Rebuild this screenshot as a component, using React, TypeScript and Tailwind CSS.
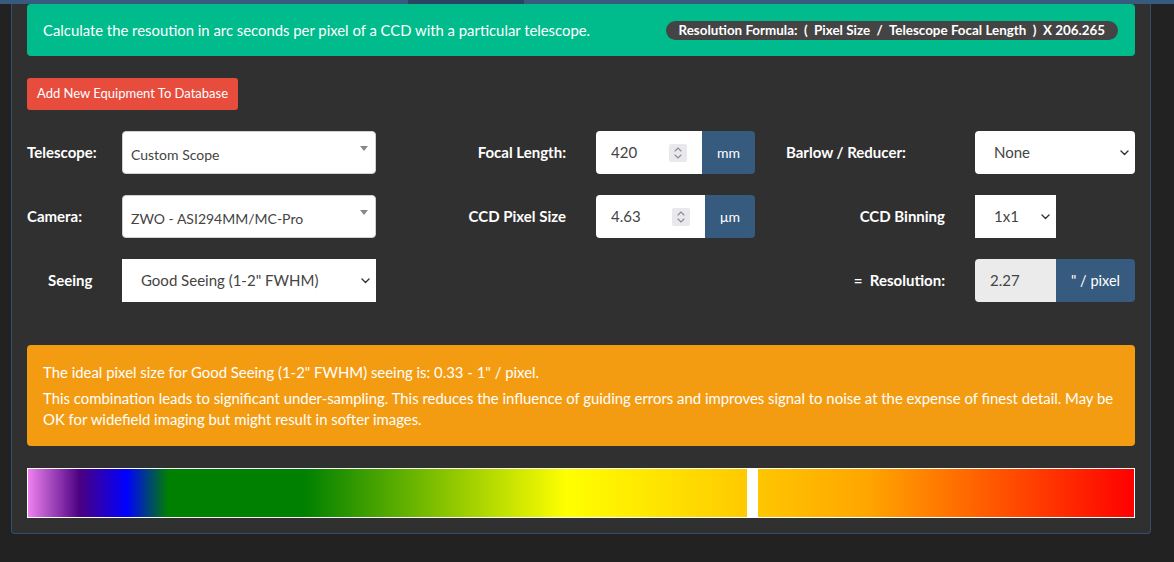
import React from "react";

const LABEL = "text-[15px] font-bold text-white";

function Caret() {
  // select2-style little triangle
  return (
    <span className="absolute right-[7px] top-[14px] w-0 h-0 border-x-[4px] border-t-[5px] border-x-transparent border-t-[#888]" />
  );
}

function Chevron() {
  return (
    <svg width="9" height="6" viewBox="0 0 9 6" fill="none" className="shrink-0">
      <path d="M1 1l3.5 3.5L8 1" stroke="#333" strokeWidth="1.4" strokeLinecap="round" strokeLinejoin="round" />
    </svg>
  );
}

function Spinner() {
  return (
    <span className="w-[18px] h-[18px] bg-[#e9e9ed] rounded-[2px] flex flex-col items-center justify-center gap-[2px]">
      <svg width="8" height="5" viewBox="0 0 8 5" fill="none"><path d="M1 4l3-3 3 3" stroke="#8a8a8a" strokeWidth="1.1" strokeLinecap="round" /></svg>
      <svg width="8" height="5" viewBox="0 0 8 5" fill="none"><path d="M1 1l3 3 3-3" stroke="#8a8a8a" strokeWidth="1.1" strokeLinecap="round" /></svg>
    </span>
  );
}

function Select2({ value }: { value: string }) {
  return (
    <div className="relative h-full bg-white border border-[#d0d0d0] rounded-[4px] pl-[8px] pt-[3px] flex items-center text-[14px] text-[#444]">
      {value}
      <Caret />
    </div>
  );
}

function NativeSelect({ value, rounded }: { value: string; rounded?: boolean }) {
  return (
    <div className={`h-full bg-white flex items-center justify-between pl-[19px] pr-[6px] text-[15px] text-[#444] ${rounded ? "rounded-[4px]" : ""}`}>
      <span>{value}</span>
      <Chevron />
    </div>
  );
}

function NumberGroup({ value, unit }: { value: string; unit: string }) {
  return (
    <div className="h-full flex rounded-[4px] overflow-hidden">
      <div className="flex-1 bg-white flex items-center justify-between px-[15px] text-[15px] text-[#444]">
        <span>{value}</span>
        <Spinner />
      </div>
      <div className="bg-[#375a7f] px-[15px] flex items-center text-[14px] text-white">{unit}</div>
    </div>
  );
}

export default function App() {
  return (
    <div className="min-h-screen bg-[#222] font-['Lato','Open_Sans',sans-serif]">
      {/* tab strip */}
      <div className="h-1 bg-[#375a7f] flex">
        <div className="ml-[408px] w-[116px] bg-[#2a4561]" />
      </div>

      <div className="ml-[11px] w-[1140px] bg-[#303030] border-x border-b border-[#34506e] rounded-b-[4px] px-[15px] pb-[15px]">
        <div className="h-[52px] bg-[#00bc8c] rounded-[4px] flex items-center justify-between pl-[16px] pr-[17px]">
          <p className="text-[14.85px] text-white">Calculate the resoution in arc seconds per pixel of a CCD with a particular telescope.</p>
          <span className="h-[19px] px-[13px] rounded-full bg-[#444] flex items-center text-[13.4px] font-bold text-white whitespace-pre">
            {"Resolution Formula:  (  Pixel Size  /  Telescope Focal Length  )  X 206.265"}
          </span>
        </div>

        <button className="mt-[22px] h-[32px] px-[10px] bg-[#e74c3c] rounded-[3px] text-[13px] text-white">Add New Equipment To Database</button>

        <div className="mt-[21px] flex flex-col gap-[21px]">
          <div className="h-[43px] flex items-center">
            <div className={`w-[95px] ${LABEL}`}>Telescope:</div>
            <div className="w-[254px] h-full"><Select2 value="Custom Scope" /></div>
            <div className={`w-[220px] text-right pr-[30px] ${LABEL}`}>Focal Length:</div>
            <div className="w-[159px] h-full"><NumberGroup value="420" unit="mm" /></div>
            <div className={`w-[220px] pl-[31px] ${LABEL}`}>Barlow / Reducer:</div>
            <div className="w-[160px] h-full"><NativeSelect value="None" rounded /></div>
          </div>

          <div className="h-[43px] flex items-center">
            <div className={`w-[95px] ${LABEL}`}>Camera:</div>
            <div className="w-[254px] h-full"><Select2 value="ZWO - ASI294MM/MC-Pro" /></div>
            <div className={`w-[220px] text-right pr-[30px] ${LABEL}`}>CCD Pixel Size</div>
            <div className="w-[159px] h-full"><NumberGroup value="4.63" unit="μm" /></div>
            <div className={`w-[220px] text-right pr-[30px] ${LABEL}`}>CCD Binning</div>
            <div className="w-[160px] h-full"><div className="w-[81px] h-full"><NativeSelect value="1x1" /></div></div>
          </div>

          <div className="h-[43px] flex items-center">
            <div className={`w-[95px] pl-[21px] ${LABEL}`}>Seeing</div>
            <div className="w-[254px] h-full"><NativeSelect value={'Good Seeing (1-2" FWHM)'} /></div>
            <div className="w-[220px]" />
            <div className="w-[159px]" />
            <div className={`w-[220px] text-right pr-[30px] whitespace-pre ${LABEL}`}>{"=  Resolution:"}</div>
            <div className="w-[160px] h-full flex rounded-[4px] overflow-hidden">
              <div className="w-[81px] bg-[#ebebeb] flex items-center pl-[15px] text-[15px] text-[#444]">2.27</div>
              <div className="flex-1 bg-[#375a7f] flex items-center justify-center text-[14.5px] text-white">" / pixel</div>
            </div>
          </div>
        </div>

        <div className="mt-[43px] bg-[#f39c12] rounded-[4px] px-[16px] pt-[17px] pb-[16px] text-[14.9px] leading-[21px] text-white">
          <p className="mb-[5px]">The ideal pixel size for Good Seeing (1-2" FWHM) seeing is: 0.33 - 1" / pixel.</p>
          <p>This combination leads to significant under-sampling. This reduces the influence of guiding errors and improves signal to noise at the expense of finest detail. May be OK for widefield imaging but might result in softer images.</p>
        </div>

        {/* sampling scale, marker shows where the current setup sits */}
        <div className="relative mt-[22px] h-[50px] border border-white bg-[linear-gradient(to_right,#ee82ee_0%,#4b0082_4.7%,#0000ff_8.9%,#008000_12.7%,#008000_25%,#ffff00_48.7%,#ffa500_76%,#ff0000_100%)]">
          <div className="absolute top-0 bottom-0 left-[719px] w-[11px] bg-white" />
        </div>
      </div>
    </div>
  );
}
